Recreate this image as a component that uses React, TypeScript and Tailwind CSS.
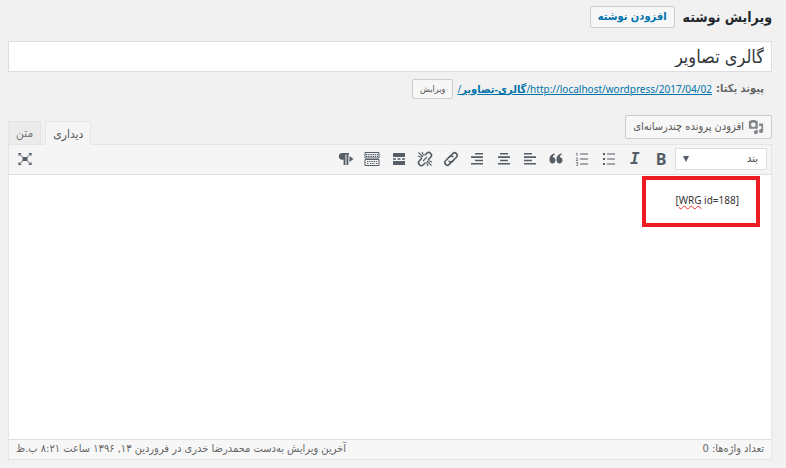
import React from 'react'

interface ToolbarItem {
  label: string;
  icon: React.ReactNode;
}

// 20x20 toolbar glyphs
const Glyph = ({ children }: { children: React.ReactNode }) => (
  <svg viewBox="0 0 20 20" className="h-5 w-5" fill="currentColor" aria-hidden="true">
    {children}
  </svg>
);

const toolbarItems: ToolbarItem[] = [
  { label: 'پررنگ', icon: <span className="font-['Open_Sans',sans-serif] text-base leading-5 font-bold">B</span> },
  { label: 'کج', icon: <span className="font-['DejaVu_Sans_Mono',monospace] text-base leading-5 font-bold italic">I</span> },
  {
    label: 'فهرست نشانه‌دار',
    icon: (
      <Glyph>
        <path d="M4 4h2v2H4zM4 9h2v2H4zM4 14h2v2H4zM8 4.500h8v1H8zM8 9.500h8v1H8zM8 14.500h8v1H8z" />
      </Glyph>
    ),
  },
  {
    label: 'فهرست شماره‌دار',
    icon: (
      <Glyph>
        <path d="M8 4.500h8v1H8zM8 9.500h8v1H8zM8 14.500h8v1H8z" />
        <path d="M4 4.500l1-.5v3M4 9h1.500v1L4 11.500h2M4 13.500h2L5 15l1 .5-.5 1H4" fill="none" stroke="currentColor" strokeWidth=".7" />
      </Glyph>
    ),
  },
  {
    label: 'نقل قول',
    icon: (
      <Glyph>
        <path d="M9 5.200C7.600 5.600 6.800 7 6.900 8.300c1.500 0 2.600 1.100 2.600 2.900 0 1.900-1.200 3.300-3 3.300-2 0-3-1.600-3-3.800C3.500 7.400 5.500 4.800 9 4.600zM16 5.200c-1.400.4-2.200 1.800-2.100 3.100 1.500 0 2.600 1.100 2.600 2.900 0 1.900-1.200 3.300-3 3.300-2 0-3-1.600-3-3.800 0-3.300 2-5.900 5.500-6.100z" />
      </Glyph>
    ),
  },
  {
    label: 'چپ‌چین',
    icon: (
      <Glyph>
        <path d="M4 4h8v1.600H4zM4 7.300h12v1.600H4zM4 10.700h8v1.600H4zM4 14h12v1.600H4z" />
      </Glyph>
    ),
  },
  {
    label: 'وسط‌چین',
    icon: (
      <Glyph>
        <path d="M6 4h8v1.600H6zM4 7.300h12v1.600H4zM6 10.700h8v1.600H6zM4 14h12v1.600H4z" />
      </Glyph>
    ),
  },
  {
    label: 'راست‌چین',
    icon: (
      <Glyph>
        <path d="M8 4h8v1.600H8zM4 7.300h12v1.600H4zM8 10.700h8v1.600H8zM4 14h12v1.600H4z" />
      </Glyph>
    ),
  },
  {
    label: 'درج پیوند',
    icon: (
      <Glyph>
        <g fill="none" stroke="currentColor" strokeWidth="1.600" strokeLinecap="round">
          <path d="M8.500 8l3.300-3.400a2.500 2.500 0 0 1 3.600 3.600l-3.800 3.900a2.500 2.500 0 0 1-3.400.2" />
          <path d="M11.500 12l-3.300 3.400a2.500 2.500 0 0 1-3.600-3.600l3.800-3.900a2.500 2.500 0 0 1 3.400-.2" />
        </g>
      </Glyph>
    ),
  },
  {
    label: 'حذف پیوند',
    icon: (
      <Glyph>
        <g fill="none" stroke="currentColor" strokeWidth="1.600" strokeLinecap="round">
          <path d="M10 6l1.700-1.700a2.600 2.600 0 0 1 3.900 3.900L13.500 10.500" />
          <path d="M10 14l-1.700 1.700a2.600 2.600 0 0 1-3.900-3.900L6.500 9.500" />
        </g>
        <path
          d="M3.500 3.500l4.500 4.500M7 3l1.500 3.500M3 7l3.500 1.500M12 12l4.500 4.500M13.500 11.500L17 13M11.500 13.500L13 17M8 12l4-4"
          fill="none"
          stroke="currentColor"
          strokeWidth="1.100"
        />
      </Glyph>
    ),
  },
  {
    label: 'درج برچسب ادامه',
    icon: (
      <Glyph>
        <path d="M4 4h12v4H4zM4 9.200h3v1.600H4zM8.500 9.200h3v1.600h-3zM13 9.200h3v1.600h-3zM4 12h12v4H4z" />
      </Glyph>
    ),
  },
  {
    label: 'نوار ابزار',
    icon: (
      <Glyph>
        <path d="M3 3.500h14v5.500H3zM3 10.500h14v6H3z" fill="none" stroke="currentColor" />
        <path d="M4 5.500h12M4 7.300h12M5 12.500h10M5 14.500h2M8 14.500h5M14 14.500h1.500" fill="none" stroke="currentColor" strokeWidth="1.200" strokeDasharray="1.400 .8" />
      </Glyph>
    ),
  },
  {
    label: 'چپ به راست',
    icon: (
      <Glyph>
        <path d="M6.200 4H13v1.500h-.6V16h-1.900V5.500h-1V16H7.600v-5.300H6.200a3.350 3.350 0 0 1 0-6.700zM13.500 7l4 3-4 3z" />
      </Glyph>
    ),
  },
];

const MediaIcon = () => (
  <svg viewBox="0 0 18 18" className="h-4 w-4 text-[#82878c]" fill="currentColor" aria-hidden="true">
    <path
      fillRule="evenodd"
      d="M2 2h1l1-1h4l1 1h1q1 0 1 1v7q0 1-1 1H2q-1 0-1-1V3q0-1 1-1zM6 3.900a2.600 2.600 0 1 0 0 5.200A2.600 2.600 0 0 0 6 3.900z"
    />
    <path d="M12.500 5H17v8.500a2.300 2.300 0 1 1-2-2.200V8h-2.500zM9 12h2v3a2.200 2.200 0 1 1-2-2.200z" />
  </svg>
);

const FullscreenIcon = () => (
  <Glyph>
    <path d="M7.500 8h5v4h-5zM3.500 4h3.200L3.500 7.200zM16.500 4h-3.200l3.200 3.200zM3.500 16h3.200l-3.200-3.200zM16.500 16h-3.200l3.200-3.200z" />
    <path d="M4 4.500l4 4M16 4.500l-4 4M4 15.500l4-4M16 15.500l-4-4" stroke="currentColor" strokeWidth="1" />
  </Glyph>
);

const Toolbar = () => (
  <div className="flex h-[30px] items-center justify-between border-b border-[#dedede] bg-[#f5f5f5] pr-1 pb-px pl-1.5 text-[#555d66]">
    <div className="flex items-center gap-px">
      <div className="relative">
        <select
          aria-label="قالب"
          className="block h-[22px] w-[92px] appearance-none border border-[#ddd] bg-white pr-2 pl-6 text-[11px] leading-5 text-[#444]"
        >
          <option>بند</option>
          <option>سربرگ ۱</option>
          <option>سربرگ ۲</option>
        </select>
        <svg viewBox="0 0 6 6" className="pointer-events-none absolute top-2 left-2 h-1.5 w-1.5" fill="currentColor" aria-hidden="true">
          <path d="M0 0h6L3 6z" />
        </svg>
      </div>
      <div className="flex w-[341px] justify-between">
        {toolbarItems.map((item) => (
          <button key={item.label} type="button" aria-label={item.label} className="flex h-6 w-[26px] items-center justify-center">
            {item.icon}
          </button>
        ))}
      </div>
    </div>
    <button type="button" aria-label="تمام صفحه" className="flex h-6 w-5 items-center justify-center">
      <FullscreenIcon />
    </button>
  </div>
);

const App = () => {
  return (
    <main
      dir="rtl"
      className="min-h-screen bg-[#f1f1f1] pt-1.5 pr-3.5 pl-2 font-['DejaVu_Sans_Condensed','DejaVu_Sans',sans-serif] text-[11px] text-[#444]"
    >
      <header className="flex items-center gap-2">
        <h1 className="text-sm leading-[22px] font-bold text-[#23282d]">ویرایش نوشته</h1>
        <button
          type="button"
          className="h-[22px] rounded-xs border border-[#ccc] bg-[#f7f7f7] px-[7px] text-[11px] leading-5 font-bold text-[#0073aa]"
        >
          افزودن نوشته
        </button>
      </header>

      <input
        type="text"
        aria-label="عنوان"
        defaultValue="گالری تصاویر"
        className="mt-[13px] block h-[31px] w-full border border-[#ddd] bg-white px-[7px] text-lg leading-7 text-[#32373c]"
      />

      <div className="mt-[7px] flex h-5 items-center gap-1 pr-2">
        <strong className="text-[#666]">پیوند یکتا:</strong>
        <a href="#permalink" className="font-['Noto_Sans','DejaVu_Sans_Condensed',sans-serif] text-[10px] text-[#0073aa] underline">
          http://localhost/wordpress/2017/04/02/<b className="text-[11px]">گالری-تصاویر</b>/
        </a>
        <button type="button" className="h-5 rounded-xs border border-[#ccc] bg-[#f7f7f7] px-[7px] text-[9px] leading-4 text-[#555]">
          ویرایش
        </button>
      </div>

      <div className="mt-4 flex h-[29px] items-start justify-between">
        <button
          type="button"
          className="flex h-6 items-center gap-1 rounded-xs border border-[#ccc] bg-[#f7f7f7] px-[7px] text-[11px] text-[#555]"
        >
          <MediaIcon />
          افزودن پرونده چندرسانه‌ای
        </button>
        <div className="flex gap-1 self-end text-xs">
          <button type="button" className="relative -mb-px h-6 border border-b-0 border-[#e5e5e5] bg-[#f5f5f5] px-[7px] text-[#555]">
            دیداری
          </button>
          <button type="button" className="h-[23px] border border-b-0 border-[#e5e5e5] bg-[#ebebeb] px-[7px] text-[#777]">
            متن
          </button>
        </div>
      </div>

      <section className="border border-[#e5e5e5] bg-white">
        <Toolbar />
        <div className="relative h-[264px]">
          <p dir="ltr" className="pt-[17px] pr-8 text-right font-['Noto_Sans',sans-serif] text-[10px] leading-4 text-[#333]">
            [<span className="underline decoration-red-500 decoration-wavy decoration-1">WRG</span> id=188]
          </p>
          <div className="absolute top-px right-[11px] h-[51px] w-[118px] border-4 border-[#ed1c24]" />
        </div>
        <footer className="flex h-5 items-center justify-between border-t border-[#dedede] bg-[#f7f7f7] px-[7px] text-[#666]">
          <span>تعداد واژه‌ها: 0</span>
          <span>آخرین ویرایش به‌دست محمدرضا خدری در فروردین ۱۳, ۱۳۹۶ ساعت ۸:۲۱ ب.ظ</span>
        </footer>
      </section>
    </main>
  );
};

export default App
